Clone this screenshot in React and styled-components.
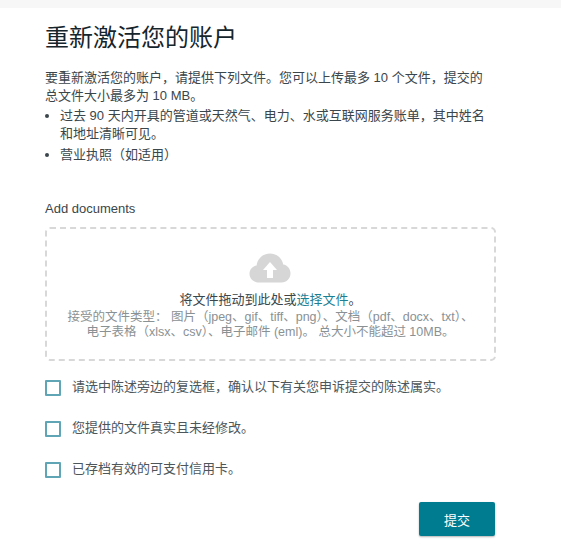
import React from "react";
import styled, { createGlobalStyle } from "styled-components";

const GlobalStyle = createGlobalStyle`
  html, body {
    margin: 0;
    padding: 0;
    background: #fff;
  }
  body {
    font-family: "Liberation Sans", "Noto Sans CJK SC", sans-serif;
    color: #3f4a4f;
  }
`;

const Page = styled.div`
  width: 561px;
  height: 545px;
  overflow: hidden;
  border-top: 8px solid #f7f7f7;
  box-sizing: border-box;
  padding: 15px 65px 0 45px;
`;

const Title = styled.h1`
  margin: 0;
  font-size: 24px;
  line-height: 29px;
  font-weight: 400;
  color: #16252c;
`;

const Intro = styled.p`
  margin: 17px 0 0;
  font-size: 13px;
  line-height: 18px;
  color: #3a464b;
`;

const Bullets = styled.ul`
  margin: 2px 0 0;
  padding: 0 0 0 15px;
  font-size: 13px;
  line-height: 18px;
  color: #3a464b;
`;

const Bullet = styled.li`
  margin-bottom: 3px;
`;

const DropLabel = styled.div`
  margin-top: 37px;
  font-size: 13px;
  line-height: 16px;
  color: #3a464b;
`;

const DropZone = styled.div`
  margin-top: 10px;
  width: 451px;
  height: 134px;
  box-sizing: border-box;
  border: 2px dashed #d8d8d8;
  border-radius: 5px;
  display: flex;
  flex-direction: column;
  align-items: center;
  padding-top: 24px;
  text-align: center;
`;

const CloudIcon = styled.svg`
  width: 42px;
  height: 30px;
  display: block;
  margin-left: -2px;
`;

const DropText = styled.div`
  margin-top: 8px;
  font-size: 13px;
  line-height: 17px;
  color: #3a464b;
`;

const PickLink = styled.span`
  color: #1d7f94;
`;

const DropHint = styled.div`
  margin-top: 2px;
  font-size: 12.5px;
  line-height: 15px;
  color: #8a9194;
`;

const Checks = styled.div`
  margin-top: 18px;
  display: flex;
  flex-direction: column;
  gap: 25px;
`;

const CheckRow = styled.label`
  display: flex;
  align-items: flex-start;
  gap: 11px;
  height: 16px;
`;

const Box = styled.span`
  width: 16px;
  height: 16px;
  box-sizing: border-box;
  flex: none;
  margin-top: 1px;
  border: 2px solid #5fa5b5;
  border-radius: 1px;
`;

const CheckText = styled.span`
  font-size: 13px;
  line-height: 15px;
  color: #4c565b;
`;

const Actions = styled.div`
  margin-top: 25px;
  width: 450px;
  display: flex;
  justify-content: flex-end;
`;

const Submit = styled.button`
  width: 76px;
  height: 34px;
  border: 0;
  border-radius: 2px;
  background: #007c91;
  box-shadow: 0 1px 2px rgba(0, 0, 0, 0.3);
  color: #fff;
  font: inherit;
  font-size: 13px;
`;

const App = () => {
  return (
    <Page>
      <GlobalStyle />
      <Title>重新激活您的账户</Title>
      <Intro>
        要重新激活您的账户，请提供下列文件。您可以上传最多 10 个文件，提交的
        <br />
        总文件大小最多为 10 MB。
      </Intro>
      <Bullets>
        <Bullet>
          过去 90 天内开具的管道或天然气、电力、水或互联网服务账单，其中姓名
          <br />
          和地址清晰可见。
        </Bullet>
        <Bullet>营业执照（如适用）</Bullet>
      </Bullets>
      <DropLabel>Add documents</DropLabel>
      <DropZone>
        <CloudIcon viewBox="0 0 42 30">
          <path
            fill="#d6d6d6"
            d="M10 29.5C4.5 29.5 0.5 25.5 0.5 20.8C0.5 16.5 3.6 13.2 7.6 12.4C8.4 5.6 14 0.5 21 0.5C27.6 0.5 33 5 34.2 11.4C38.6 12 41.5 15.8 41.5 20.3C41.5 25.5 37.6 29.5 32.5 29.5Z"
          />
          <path fill="#fff" d="M21 9L28 17H24V25H18V17H14Z" />
        </CloudIcon>
        <DropText>
          将文件拖动到此处或<PickLink>选择文件</PickLink>。
        </DropText>
        <DropHint>
          接受的文件类型： 图片（jpeg、gif、tiff、png）、文档（pdf、docx、txt）、
          <br />
          电子表格（xlsx、csv）、电子邮件 (eml)。 总大小不能超过 10MB。
        </DropHint>
      </DropZone>
      <Checks>
        <CheckRow>
          <Box />
          <CheckText>请选中陈述旁边的复选框，确认以下有关您申诉提交的陈述属实。</CheckText>
        </CheckRow>
        <CheckRow>
          <Box />
          <CheckText>您提供的文件真实且未经修改。</CheckText>
        </CheckRow>
        <CheckRow>
          <Box />
          <CheckText>已存档有效的可支付信用卡。</CheckText>
        </CheckRow>
      </Checks>
      <Actions>
        <Submit>提交</Submit>
      </Actions>
    </Page>
  );
};

export default App;
